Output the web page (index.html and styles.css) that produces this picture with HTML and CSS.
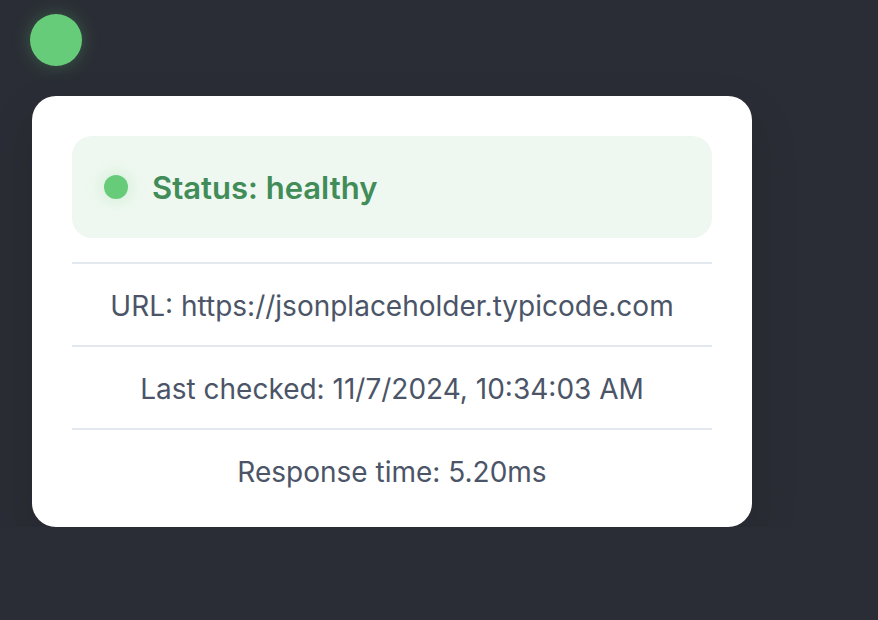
FILE: index.html
```html
<!DOCTYPE html>
<html>
<head>
<meta charset="utf-8">
<link rel="stylesheet" href="styles.css">
</head>
<body>
<div class="page">
  <div class="indicator"></div>
  <div class="card">
    <div class="status">
      <span class="dot"></span>
      <span class="status-text">Status: healthy</span>
    </div>
    <div class="row">URL: https://jsonplaceholder.typicode.com</div>
    <div class="row">Last checked: 11/7/2024, 10:34:03 AM</div>
    <div class="row">Response time: 5.20ms</div>
  </div>
</div>
</body>
</html>
```
FILE: styles.css
```css
html, body {
  margin: 0;
  padding: 0;
  background: #2a2d35;
  font-family: Inter, "Noto Sans", sans-serif;
}
.page {
  padding: 14px 0 0 32px;
  display: flex;
  flex-direction: column;
  align-items: flex-start;
}
.indicator {
  width: 52px;
  height: 52px;
  margin-left: -2px;
  border-radius: 50%;
  background: #66cc7a;
  box-shadow: 0 0 18px rgba(102, 204, 122, 0.3);
}
.card {
  margin-top: 30px;
  width: 720px;
  box-sizing: border-box;
  padding: 40px 40px 38px;
  background: #ffffff;
  border-radius: 24px;
  box-shadow: 0 20px 50px rgba(0, 0, 0, 0.12);
}
.status {
  height: 102px;
  box-sizing: border-box;
  background: #eff8f0;
  border-radius: 20px;
  display: flex;
  align-items: center;
  padding-left: 32px;
  gap: 24px;
  margin-bottom: 24px;
}
.dot {
  width: 24px;
  height: 24px;
  border-radius: 50%;
  background: #66cc7a;
  box-shadow: 0 0 18px rgba(102, 204, 122, 0.3);
}
.status-text {
  font-size: 31px;
  font-weight: 600;
  color: #418c58;
}
.row {
  border-top: 2px solid #e3e7ee;
  padding: 26px 0 22px;
  line-height: 33px;
  text-align: center;
  font-size: 28px;
  color: #4b5567;
}
.row:last-child {
  padding-bottom: 0;
}
```
